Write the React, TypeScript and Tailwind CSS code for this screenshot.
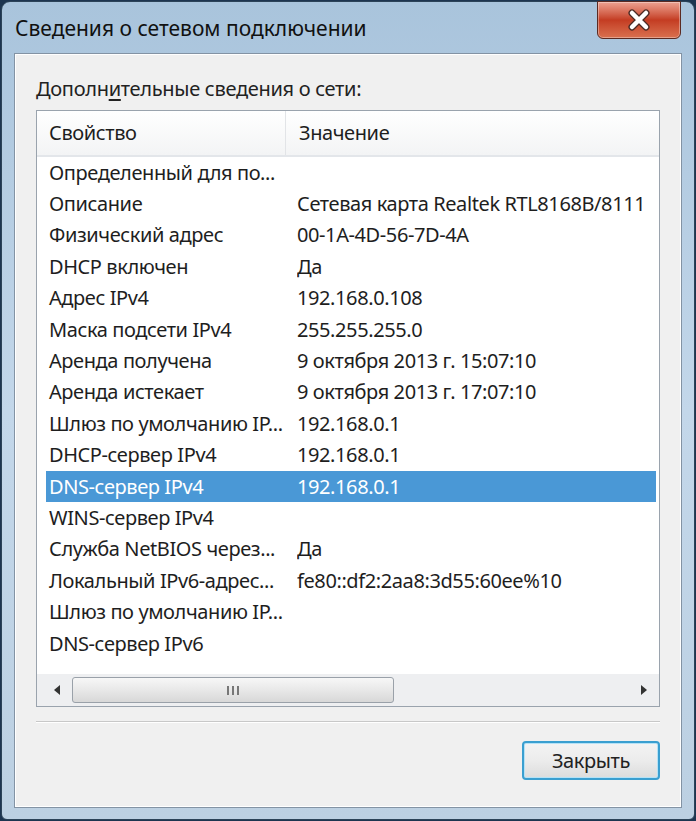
import React from 'react';

const rows: [string, string][] = [
  ['Определенный для по...', ''],
  ['Описание', 'Сетевая карта Realtek RTL8168B/8111'],
  ['Физический адрес', '00-1A-4D-56-7D-4A'],
  ['DHCP включен', 'Да'],
  ['Адрес IPv4', '192.168.0.108'],
  ['Маска подсети IPv4', '255.255.255.0'],
  ['Аренда получена', '9 октября 2013 г. 15:07:10'],
  ['Аренда истекает', '9 октября 2013 г. 17:07:10'],
  ['Шлюз по умолчанию IP...', '192.168.0.1'],
  ['DHCP-сервер IPv4', '192.168.0.1'],
  ['DNS-сервер IPv4', '192.168.0.1'],
  ['WINS-сервер IPv4', ''],
  ['Служба NetBIOS через...', 'Да'],
  ['Локальный IPv6-адрес...', 'fe80::df2:2aa8:3d55:60ee%10'],
  ['Шлюз по умолчанию IP...', ''],
  ['DNS-сервер IPv6', ''],
];

const SELECTED = 10;

export default function App() {
  return (
    <div
      className="w-[696px] h-[821px] bg-[#1d3550] overflow-hidden text-[#1e1e1e]"
      style={{ fontFamily: '"Noto Sans", "Open Sans", sans-serif' }}
    >
      {/* window frame */}
      <div className="relative w-[694px] h-[819px] ml-px mt-px rounded-t-[9px] rounded-b-[6px] border border-[#2c4358] bg-gradient-to-b from-[#a9c4dc] via-[#c3d7ea] to-[#bcd0e2] px-[12px] pb-[11px] flex flex-col">
        {/* title bar */}
        <div className="h-[51px] shrink-0 flex items-center">
          <span className="text-[21px] text-[#111] pl-[1px] pt-[2px]">Сведения о сетевом подключении</span>
        </div>
        {/* close button */}
        <div className="absolute top-[-1px] right-[13px] w-[84px] h-[38px] rounded-b-[6px] border border-[#5b2a22] bg-gradient-to-b from-[#eba191] via-[#c43c22] to-[#d9704f] flex items-center justify-center shadow-[inset_0_0_0_1px_rgba(255,255,255,0.35)]">
          <svg width="26" height="22" viewBox="0 0 26 22">
            <path
              d="M6 4 L20 18 M20 4 L6 18"
              stroke="#4a2a24"
              strokeWidth="7"
              strokeLinecap="round"
              fill="none"
            />
            <path
              d="M6 4 L20 18 M20 4 L6 18"
              stroke="#ffffff"
              strokeWidth="4.5"
              strokeLinecap="round"
              fill="none"
            />
          </svg>
        </div>

        {/* content panel */}
        <div className="flex-1 border border-[#8393a4] bg-[#f0f0f0] shadow-[inset_0_0_0_1px_#ffffff] px-[21px] flex flex-col">
          <div className="h-[56px] flex items-end pb-[6px] text-[20px] tracking-[-0.3px] text-[#222]">
            <span>
              Дополн<span className="underline underline-offset-[3px]">и</span>тельные сведения о сети:
            </span>
          </div>

          {/* list view */}
          <div className="h-[597px] border border-[#9aa3ad] bg-white flex flex-col">
            {/* header */}
            <div className="h-[46px] shrink-0 flex bg-gradient-to-b from-[#ffffff] to-[#f3f4f5] border-b-2 border-[#e3e6ea] text-[20px] tracking-[-0.4px]">
              <div className="w-[249px] border-r border-[#e2e4e7] pl-[12px] flex items-center">Свойство</div>
              <div className="flex-1 pl-[13px] flex items-center">Значение</div>
            </div>
            {/* rows */}
            <div className="flex-1 pl-[9px] pr-[3px] overflow-hidden">
              {rows.map(([k, v], i) => (
                <div
                  key={i}
                  className={`h-[31.4px] flex items-center text-[20px] tracking-[-0.4px] whitespace-nowrap overflow-hidden ${
                    i === SELECTED ? 'bg-[#4a98d6] text-white' : 'text-[#1e1e1e]'
                  }`}
                >
                  <div className="w-[251px] shrink-0 pl-[3px] overflow-hidden">{k}</div>
                  <div className="flex-1 overflow-hidden">{v}</div>
                </div>
              ))}
            </div>
            {/* horizontal scrollbar */}
            <div className="h-[32px] shrink-0 bg-[#eeeff1] flex items-center pl-[9px] pr-[12px]">
              <div className="w-[22px] flex justify-center">
                <svg width="6" height="10" viewBox="0 0 6 10">
                  <path d="M6 0 L0 5 L6 10 Z" fill="#333" />
                </svg>
              </div>
              <div className="w-[322px] h-[26px] ml-[4px] rounded-[3px] border border-[#9aa1a9] bg-gradient-to-b from-[#f7f7f7] via-[#e8e8e8] to-[#d8d8d8] flex items-center justify-center gap-[3px]">
                <div className="w-[2px] h-[9px] bg-[#777]" />
                <div className="w-[2px] h-[9px] bg-[#777]" />
                <div className="w-[2px] h-[9px] bg-[#777]" />
              </div>
              <div className="flex-1" />
              <svg width="6" height="10" viewBox="0 0 6 10">
                <path d="M0 0 L6 5 L0 10 Z" fill="#333" />
              </svg>
            </div>
          </div>

          {/* separator */}
          <div className="mt-[14px] h-[2px] border-t border-[#c8c8c8] border-b border-b-white" />

          {/* button row */}
          <div className="flex justify-end pt-[18px]">
            <button className="w-[138px] h-[39px] rounded-[4px] border-2 border-[#3a9fd0] bg-gradient-to-b from-[#f3f3f3] via-[#ececec] to-[#dcdcdc] shadow-[inset_0_0_0_1px_#b5e2f6] text-[20px] tracking-[-0.4px] text-[#222]">
              Закрыть
            </button>
          </div>
        </div>
      </div>
    </div>
  );
}
